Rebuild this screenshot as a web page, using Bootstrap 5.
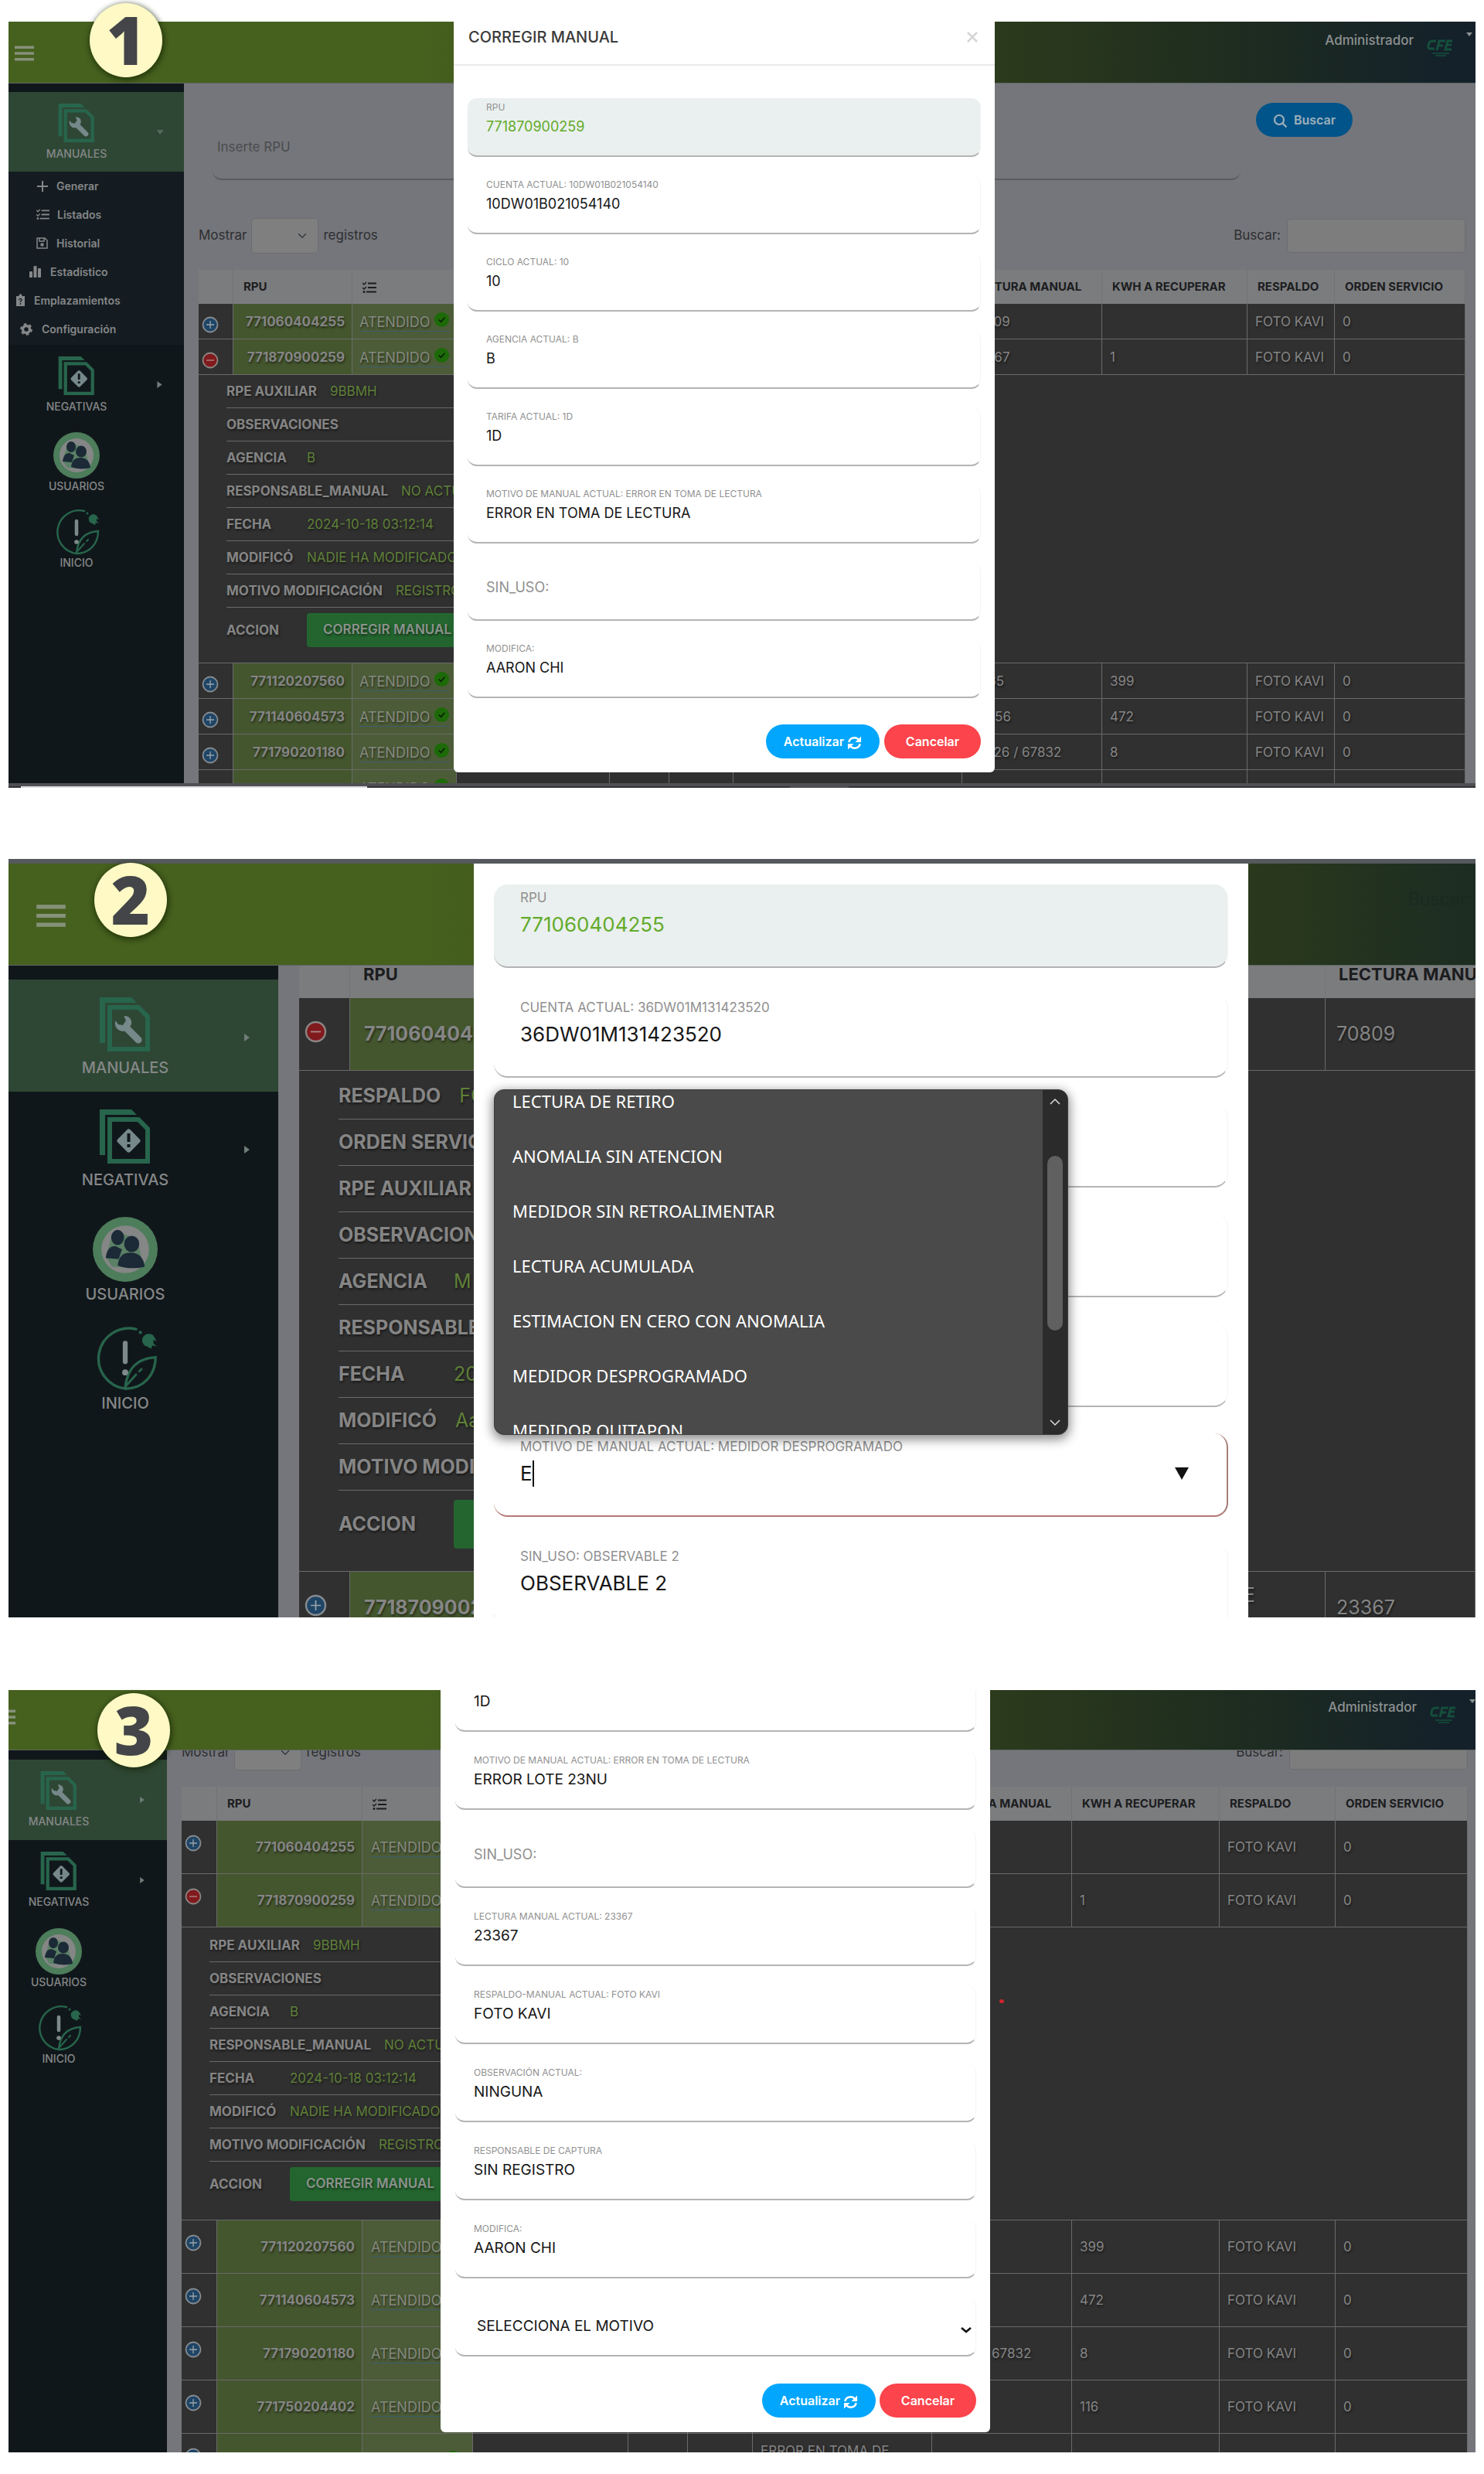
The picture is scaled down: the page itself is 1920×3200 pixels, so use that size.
<!DOCTYPE html>
<html lang="es">
<head>
<meta charset="utf-8">
<meta name="viewport" content="width=device-width, initial-scale=1">
<title>Corregir manual</title>
<link href="https://cdn.jsdelivr.net/npm/bootstrap@5.3.0/dist/css/bootstrap.min.css" rel="stylesheet">
<style>
body{font-family:Inter,"Liberation Sans",sans-serif;background:#fff;color:#222;padding:28px 11px 26px}
/* one step of the guide: number + cropped window */
.step{position:relative}
.step-num{position:absolute;z-index:5;width:94px;height:96px;border-radius:50%;background:#fef9c5;color:#444548;box-shadow:1px 2px 6px 2px rgba(20,35,0,.6);font:800 86px/94px "Open Sans",sans-serif;text-align:center}
.win{position:relative;overflow:hidden;background:#75767b;--fs:17px;--row:46px}
.s1 .win{height:991px}.s2 .win{height:981px}.s3 .win{height:986px}
.s2{margin-top:92px}.s3{margin-top:94px}
.s1 .step-num{left:105px;top:-24px}.s2 .step-num{left:111px;top:5px}.s3 .step-num{left:115px;top:4px}
/* top bar */
.topbar{background:linear-gradient(90deg,#46601e 0,#46601e 28%,#2a391c 69%,#1e2c20 84%,#14212a 98%);border-bottom:1px solid #5c6660;color:#8d8f8e;height:80px}
.s2 .topbar{height:132px;background:linear-gradient(90deg,#46601e 0,#46601e 28%,#2a391c 85%,#1c2c22 100%)}
.s3 .topbar{height:78px}
.s2 .win{border-top:6px solid #55585c}
.burger{border:0;background:none;padding:0;color:#86917a;display:block}
.s1 .burger{margin:27px 0 0 8px}.s2 .burger{margin:53px 0 0 36px}.s3 .burger{margin:21px 0 0 -16px}
.user{color:#8d9191;text-decoration:none;font-size:17px;font-weight:500;line-height:20px;padding-top:14px}
.s3 .user{padding-top:12px}
/* side menu */
.side{background:#10171a;flex:none;color:#858788;font-weight:500}
.s1 .side{width:227px;padding-top:11px}.s2 .side{width:349px;padding-top:18px}.s3 .side{width:205px;padding-top:12px}
.side a{color:#858788;text-decoration:none}
.item{display:flex;align-items:center;height:103px;font-size:14px;line-height:18px}
.item.on{background:#2e4734}
.item .pic{width:176px;text-align:center;flex:none}
.item .pic svg{display:block;margin:0 auto 6px}
.item .caret{margin-left:16px}
.item.round{height:99px}
.item.round .pic svg{margin-bottom:1px}
.s2 .item{height:145px;font-size:20px;line-height:26px;padding-top:5px}.s2 .item .pic{width:302px}
.s2 .item .pic svg{margin-bottom:8px}
.s2 .item .caret{margin-left:3px}
.s2 .item.round{height:141px}.s2 .item.round .pic svg{margin-bottom:3px}
.s3 .item{height:104px}.s3 .item .pic{width:130px}.s3 .item .caret{margin-left:40px}
.s3 .item.round{height:99px}
.sub{background:#141c21;height:224px;font-size:14px;font-weight:600}
.sub a{display:flex;align-items:center;height:37px;gap:10px}
.sub svg{flex:none}
.sub .in1{padding-left:36px}.sub .in2{padding-left:27px}.sub .in3{padding-left:9px}.sub .in4{padding-left:15px}
/* content */
.content{flex:1 1 0;min-width:0;padding:0 13px 0 19px;overflow:hidden}
.s2 .content{padding:0 0 0 27px}.s3 .content{padding:0 10px 0 19px}
.s1 .content{height:905px}
.rpu-search{margin:49px 0 0 18px;height:76px;flex:0 1 1330px;border:0;border-bottom:2px solid #5a5b5e;border-radius:12px;background:none;padding:0 6px 8px;font-size:17px;color:#3d3e41}
.rpu-search::placeholder{color:#4a4b4e;opacity:1}
.btn-find{margin:25px 0 0 20px;background:#01548a;color:#9fb0ba;width:125px;height:44px;border-radius:22px;font-size:16px;font-weight:600;padding:0}
.tools{height:46px;color:#2d2e31;font-size:17px;margin-bottom:21px}
.s1 .tools{margin-top:49px}.s3 .tools{margin-top:-20px}
.tools .form-select{width:87px;height:46px;background-color:#7f7f7f;border-color:#6c6d70;margin:0 6px;border-radius:5px}
.tools .form-control{width:231px;height:44px;background:#7d7d7d;border-color:#6c6d70;border-radius:5px}
.grid{table-layout:fixed;width:100%;border-collapse:separate;border-spacing:0;font-size:var(--fs);color:#858585;text-shadow:1px 2px 3px rgba(0,0,0,.5)}
.grid th{background:#7b7c7e;color:#1b1c1e;font-weight:700;text-shadow:none;border-right:1px solid #727375;height:44px;padding:0 0 0 13px;white-space:nowrap;font-size:15px}
.grid td{background:#303030;border-right:1px solid #6a6a6a;border-bottom:1px solid #6a6a6a;height:var(--row);padding:0 10px;overflow:hidden;line-height:24px}
.s3 .grid{--row:69px}.s2 .grid{--row:94px;--fs:25px;margin-top:-23px}
.grid td:first-child{vertical-align:top;padding:16px 0 0 4px}
.s1 .grid td:first-child{padding-top:14px}
.s2 .grid td:first-child{padding:25px 0 0 7px}
.grid td.num{background:#44562e;text-align:right;font-weight:700;padding-right:9px}
.grid td.st{background:#4c5c38;padding-left:9px;white-space:nowrap;font-size:18px}
.grid .st a{color:#85897f;text-decoration:none;display:inline-block;border-bottom:1px solid #3d5c6a;line-height:23px}
.grid .st svg{vertical-align:-1px;margin-left:5px}
.s3 .grid .st{padding-left:11px}
.s2 .grid th{height:65px;font-size:22px;padding:3px 0 0 17px}.s2 .grid td{padding:0 14px;line-height:33px}
.s2 .grid td.num{text-align:left;padding-left:18px}
.tog{border:0;background:none;padding:0;display:block}
.s1 .grid td.more,.s2 .grid td.more,.s3 .grid td.more{padding:0 0 0 36px;vertical-align:top;height:373px}
.s3 .grid td.more{height:379px;padding-top:2px}
.s2 .grid td.more{height:648px;padding:3px 0 0 51px}
.facts{list-style:none;margin:0;padding:0;width:60%}
.facts li{display:flex;align-items:center;height:43px;border-bottom:1px solid #6a6a6a;gap:17px;color:#5f8038;white-space:nowrap}
.facts b{min-width:87px;color:#858585;font-weight:700}
.facts li:last-child{height:58px;border:0}
.facts .btn{height:44px;background:#24652f;color:#8b938c;border-radius:4px;font-size:17px;font-weight:600;padding:0 20px;text-shadow:inherit}
.s2 .facts li{height:60px;gap:24px}.s2 .facts b{min-width:125px}.s2 .facts li:last-child{height:87px}
.s2 .facts .btn{height:63px}
.scroll-end{height:6px;background:linear-gradient(90deg,#333 0 16px,#ddd 16px 464px,#333 464px 1011px,#4c4c4e 1011px 1087px,#333 1087px) 0 100%/100% 2px no-repeat #4f5053}
/* dialog over the window */
.dlg{position:absolute;z-index:3;background:#fff;border-radius:0 0 6px 6px;overflow:hidden}
.s1 .dlg{left:576px;width:700px;top:-1px;height:972px}
.s2 .dlg{left:602px;width:1002px;top:0;bottom:0;border-radius:0}
.s3 .dlg{left:559px;width:711px;top:0;height:960px}
.dlg-head{height:58px;border-bottom:2px solid #e9ebec;padding:0 22px 14px 19px}
.dlg-head h1{font-size:20px;font-weight:500;margin:0;color:#3b3b3b}
.dlg-head button{border:0;background:none;padding:0;color:#d5d5d5;line-height:0}
.dlg-body{padding:42px 18px 0}
.s2 .dlg-body{padding:27px 26px 0}.s3 .dlg-body{padding:0 18px 0 19px}
.fld{display:flex;flex-direction:column;position:relative;height:76px;margin-bottom:24px;border-radius:12px;border-bottom:2px solid #b4b4b4;border-right:1px solid #f4f4f4;padding:5px 24px 0}
.fld label{font-size:12px;line-height:14px;color:#909090}
.fld input,.fld select{border:0;background:none;padding:0;outline:0;width:100%;font-size:18px;line-height:24px;height:24px;margin-top:6px;color:#161616}
.s3 .fld input,.s3 .fld select{font-size:19px}
.fld.ro{background:#eaf0ef}.fld.ro input{color:#63ab2b}
.fld.empty label{font-size:18px;line-height:24px;padding-top:16px}
.fld.empty input{position:absolute;inset:0;margin:0;height:74px}
.s3 .fld{margin-bottom:25px}.s3 .fld:first-child{margin-top:-22px}
.s2 .fld{height:108px;margin-bottom:34px;border-radius:18px;padding:7px 33px 0 34px}
.s2 .fld label{font-size:17px;line-height:20px}.s2 .fld input{font-size:26px;line-height:34px;height:34px;margin-top:8px}
.s2 .fld.hot{border-bottom-color:#b47a75;border-right:2px solid #a67c78}
.s2 .fld.hot input{width:18px;border-right:2px solid #111}
.tri{border:9px solid transparent;border-top:16px solid #111;border-bottom:0}
.fld.pick select{appearance:none;margin-top:20px;padding-left:4px}
.fld select + svg{position:absolute;right:5px;top:38px}
.acts{display:flex;justify-content:flex-end;gap:6px;margin-top:34px}
.s3 .acts{margin-top:35px;gap:5px}
.acts .btn{height:44px;border-radius:22px;color:#fff;font-size:16px;font-weight:600;padding:0;border:0}
.acts .go{width:147px;background:#02a6fc}.acts .no{width:125px;background:#fb444b}
/* suggestion list */
.opts{position:absolute;z-index:4;left:26px;top:292px;width:743px;height:447px;background:#4a4a4a;border-radius:13px;overflow:hidden;box-shadow:0 4px 14px 2px rgba(0,0,0,.45);border:1px solid #3c3c3c}
.opts ul{list-style:none;margin:0;padding:0 0 0 23px;flex:1;margin-top:-21px;font:22px/71px "Noto Sans",sans-serif;color:#fff}
.opts .rail{width:32px;background:#2b2b2b;padding:10px 6px}
.opts .thumb{height:226px;width:20px;border-radius:10px;background:#606060;margin-top:66px}
.ping{position:absolute;z-index:2;left:1282px;top:400px;width:6px;height:5px;border-radius:50%;background:#d32430}
.s2 .ghost{color:#1b2a20;font-size:23px;margin:29px 5px 0 0}
</style>
</head>
<body>
<svg width="0" height="0" class="position-absolute" aria-hidden="true">
<defs>
<symbol id="doc" viewBox="0 0 66 70"><path fill="#27654c" d="M0 0H41L48 7H7V59H0Z"/><path fill="none" stroke="#27654c" stroke-width="6" d="M13 13H50L62 25V67H13Z"/></symbol>
<symbol id="manual" viewBox="0 0 66 70"><use href="#doc"/><path d="M34 39 50 55" stroke="#76888a" stroke-width="9" stroke-linecap="round"/><path fill="#76888a" d="M20 31c-1 8 4 13 11 13l9-7c3-6 0-12-7-13-1 0-2 1-1 2l2 4-4 6-6-1-3-4Z"/></symbol>
<symbol id="negat" viewBox="0 0 66 70"><use href="#doc"/><rect x="26" y="29" width="23" height="23" rx="3" transform="rotate(45 37.5 40.500)" fill="#76888a"/><path d="M37.500 31v11M37.500 45v4" stroke="#10171a" stroke-width="4"/></symbol>
<symbol id="people" viewBox="0 0 60 60"><circle cx="30" cy="30" r="30" fill="#4d7d5b"/><circle cx="30" cy="30" r="22" fill="#858686"/><path fill="#4d7d5b" d="M17 20a7 7 0 0 1 12-4l12 4 5 22-10 5-18-1-6-9Z" opacity=".75"/><g fill="#1b2a36"><ellipse cx="23" cy="19" rx="6" ry="7"/><path d="M12 38c1-8 4-11 9-11l6 3-3 9Z"/><ellipse cx="36" cy="25" rx="7" ry="7.500"/><path d="M23 45c1-9 5-12 12-12s12 4 13 13c-8 2-17 2-25-1Z"/></g></symbol>
<symbol id="home" viewBox="0 0 60 60"><g fill="none" stroke="#27654c" stroke-width="2.400" stroke-linecap="round"><path d="M40 3A28 28 0 1 0 30 58c16 0 28-12 28-29-16 1-26 9-28 28"/><path d="M31 55 40 45M43 42l2-2" stroke-width="2"/></g><circle cx="44" cy="6" r="1.500" fill="#27654c"/><path fill="#27654c" d="M46 11c2-4 7-5 10-2l3 5-3-1 0 3 3 3-4-1-1 3-4-2c-3-1-5-4-4-8Z"/><path d="M30 16v17" stroke="#7e8a8a" stroke-width="4.500" stroke-linecap="round"/><circle cx="30" cy="43" r="2.800" fill="#7e8a8a"/></symbol>
<symbol id="plus" viewBox="0 0 22 22"><circle cx="11" cy="11" r="9.500" fill="#1f4566" stroke="#868b90" stroke-width="1.800"/><path d="M6 11h10M11 6v10" stroke="#9aa3aa" stroke-width="1.300"/></symbol>
<symbol id="minus" viewBox="0 0 22 22"><circle cx="11" cy="11" r="9.500" fill="#811a1d" stroke="#8b8684" stroke-width="1.800"/><path d="M6 11h10" stroke="#b08a8a" stroke-width="1.300"/></symbol>
<symbol id="ok" viewBox="0 0 22 22"><circle cx="11" cy="11" r="10" fill="#1c6a08"/><path d="m7 11 3 3 5-6" fill="none" stroke="#0a1c06" stroke-width="1.600"/></symbol>
<symbol id="list" viewBox="0 0 18 16"><path d="M7 2.500h11M7 8h11M5 13.500h13" stroke="currentColor" stroke-width="2"/><path d="m0 2 2 2 3-3M0 8l2 2 3-3" fill="none" stroke="currentColor" stroke-width="1.500"/><circle cx="2" cy="13.500" r="1.500" fill="currentColor"/></symbol>
<symbol id="bars" viewBox="0 0 26 20"><path d="M0 2h26M0 10h26M0 18h26" stroke="currentColor" stroke-width="3.600"/></symbol>
<symbol id="right" viewBox="0 0 7 10"><path d="M0 0 7 5 0 10Z" fill="#6e7d78"/></symbol>
<symbol id="cfe" viewBox="0 0 36 26"><g fill="none" stroke="#154f3c" stroke-width="3"><path d="M13 3H8C3 3 1 13 5 13h6M14 15l3-12h8M16 9h6M34 3h-6l-3 11h8M27 8h6"/></g><path d="M8 19h22M12 22h14" stroke="#154f3c" stroke-width="1.500"/></symbol>
<symbol id="sync" viewBox="0 0 20 18"><path fill="none" stroke="#fff" stroke-width="2.600" d="M2.500 8C3.500 1.500 12 0 16 5M17.500 10c-1 6.500-9.500 8-13.500 3"/><path fill="#fff" d="M19 0v8h-8ZM1 18v-8h8Z"/></symbol>
</defs></svg>

<main>
<section class="step s1">
<div class="step-num">1</div>
<div class="win">
<header class="topbar d-flex justify-content-between align-items-start">
<button class="burger" aria-label="Menú"><svg width="25" height="20"><use href="#bars"/></svg></button>
<a href="#" class="user d-flex align-items-start pe-1"><span class="me-3">Administrador</span><svg class="mt-2 me-3" width="36" height="26"><use href="#cfe"/></svg><svg width="8" height="5"><path d="M0 0h8L4 5Z" fill="#8d9191"/></svg></a>
</header>
<div class="d-flex">
<nav class="side">
<a href="#" class="item on"><span class="pic"><svg width="48" height="50"><use href="#manual"/></svg>MANUALES</span><svg class="caret" width="9" height="6"><path d="M0 0h9L4 6Z" fill="#54695c"/></svg></a>
<div class="sub">
<a href="#" class="in1"><svg width="16" height="16"><path d="M8 1v14M1 8h14" stroke="#858788" stroke-width="2"/></svg>Generar</a>
<a href="#" class="in1"><svg width="17" height="15"><use href="#list"/></svg>Listados</a>
<a href="#" class="in1"><svg width="16" height="15" fill="none" stroke="#858788" stroke-width="1.500"><path d="M1 1h10l3 3v10H1ZM4 1v4h6V1"/><circle cx="7.500" cy="9.500" r="1.500" fill="#858788"/></svg>Historial</a>
<a href="#" class="in2"><svg width="17" height="15" fill="#858788"><rect y="7" width="4" height="8" rx="1"/><rect x="5.500" width="4" height="15" rx="1"/><rect x="11" y="3" width="4" height="12" rx="1"/></svg>Estadístico</a>
<a href="#" class="in3"><svg width="14" height="17"><path d="M1 3h3l2-3h1l2 3h3v13H1Z" fill="#858788"/><path d="M4.500 8c1-3 5-1 3 1l-1 1v1M6.500 12v2" stroke="#141c21" fill="none" stroke-width="1.300"/></svg>Emplazamientos</a>
<a href="#" class="in4"><svg width="18" height="16"><circle cx="8" cy="8" r="4.500" fill="none" stroke="#858788" stroke-width="3.500"/><circle cx="8" cy="8" r="6.700" fill="none" stroke="#858788" stroke-width="2.400" stroke-dasharray="3.500 3.510"/></svg>Configuración</a>
</div>
<a href="#" class="item"><span class="pic"><svg width="48" height="50"><use href="#negat"/></svg>NEGATIVAS</span><svg class="caret" width="7" height="9"><use href="#right"/></svg></a>
<a href="#" class="item round"><span class="pic"><svg width="60" height="60"><use href="#people"/></svg>USUARIOS</span></a>
<a href="#" class="item round"><span class="pic"><svg width="60" height="60"><use href="#home"/></svg>INICIO</span></a>
</nav>
<div class="content">
<div class="d-flex align-items-start"><input class="rpu-search" type="text" placeholder="Inserte RPU" aria-label="Inserte RPU"><button class="btn btn-find"><svg width="19" height="19" class="me-2" fill="none" stroke="#9fb0ba" stroke-width="2.200"><circle cx="8" cy="8" r="6"/><path d="m12.500 12.500 5 5"/></svg>Buscar</button></div>
<div class="tools d-flex align-items-center"><label for="n1">Mostrar</label><select id="n1" class="form-select"><option></option></select>registros<label for="q1" class="ms-auto me-2">Buscar:</label><input id="q1" class="form-control" type="search"></div>
<table class="grid">
<colgroup><col style="width:45px"><col style="width:154px"><col style="width:135px"><col style="width:198px"><col style="width:77px"><col style="width:83px"><col style="width:296px"><col style="width:181px"><col style="width:188px"><col style="width:113px"><col></colgroup>
<thead><tr><th></th><th>RPU</th><th><svg width="18" height="16"><use href="#list"/></svg></th><th></th><th></th><th></th><th></th><th>LECTURA MANUAL</th><th>KWH A RECUPERAR</th><th>RESPALDO</th><th>ORDEN SERVICIO</th></tr></thead>
<tbody>
<tr><td><button class="tog" aria-label="Abrir"><svg width="22" height="22"><use href="#plus"/></svg></button></td><td class="num">771060404255</td><td class="st"><a href="#">ATENDIDO<svg width="21" height="21"><use href="#ok"/></svg></a></td><td></td><td></td><td></td><td></td><td>70809</td><td></td><td class="text-nowrap">FOTO KAVI</td><td>0</td></tr>
<tr><td><button class="tog" aria-label="Cerrar"><svg width="22" height="22"><use href="#minus"/></svg></button></td><td class="num">771870900259</td><td class="st"><a href="#">ATENDIDO<svg width="21" height="21"><use href="#ok"/></svg></a></td><td></td><td></td><td></td><td></td><td>23367</td><td>1</td><td class="text-nowrap">FOTO KAVI</td><td>0</td></tr>
<tr><td colspan="11" class="more"><ul class="facts"><li><b>RPE AUXILIAR</b>9BBMH</li><li><b>OBSERVACIONES</b></li><li><b>AGENCIA</b>B</li><li><b>RESPONSABLE_MANUAL</b>NO ACTUALIZADO</li><li><b>FECHA</b>2024-10-18 03:12:14</li><li><b>MODIFICÓ</b>NADIE HA MODIFICADO</li><li><b>MOTIVO MODIFICACIÓN</b>REGISTRO</li><li><b>ACCION</b><button class="btn">CORREGIR MANUAL</button></li></ul></td></tr>
<tr><td><button class="tog" aria-label="Abrir"><svg width="22" height="22"><use href="#plus"/></svg></button></td><td class="num">771120207560</td><td class="st"><a href="#">ATENDIDO<svg width="21" height="21"><use href="#ok"/></svg></a></td><td></td><td></td><td></td><td></td><td>11765</td><td>399</td><td class="text-nowrap">FOTO KAVI</td><td>0</td></tr>
<tr><td><button class="tog" aria-label="Abrir"><svg width="22" height="22"><use href="#plus"/></svg></button></td><td class="num">771140604573</td><td class="st"><a href="#">ATENDIDO<svg width="21" height="21"><use href="#ok"/></svg></a></td><td></td><td></td><td></td><td></td><td>40256</td><td>472</td><td class="text-nowrap">FOTO KAVI</td><td>0</td></tr>
<tr><td><button class="tog" aria-label="Abrir"><svg width="22" height="22"><use href="#plus"/></svg></button></td><td class="num">771790201180</td><td class="st"><a href="#">ATENDIDO<svg width="21" height="21"><use href="#ok"/></svg></a></td><td></td><td></td><td></td><td></td><td>67826 / 67832</td><td>8</td><td class="text-nowrap">FOTO KAVI</td><td>0</td></tr>
<tr><td></td><td class="num"></td><td class="st"><a href="#">ATENDIDO<svg width="21" height="21"><use href="#ok"/></svg></a></td><td></td><td></td><td></td><td></td><td></td><td></td><td></td><td></td></tr>
</tbody></table>
</div>
</div>
<div class="scroll-end"></div>
<form class="dlg">
<div class="dlg-head d-flex justify-content-between align-items-center"><h1>CORREGIR MANUAL</h1><button type="button" aria-label="Cerrar"><svg width="14" height="14" stroke="currentColor" stroke-width="2.500"><path d="m1 1 12 12M13 1 1 13"/></svg></button></div>
<div class="dlg-body">
<div class="fld ro"><label for="a1">RPU</label><input id="a1" value="771870900259" readonly></div>
<div class="fld"><label for="a2">CUENTA ACTUAL: 10DW01B021054140</label><input id="a2" value="10DW01B021054140"></div>
<div class="fld"><label for="a3">CICLO ACTUAL: 10</label><input id="a3" value="10"></div>
<div class="fld"><label for="a4">AGENCIA ACTUAL: B</label><input id="a4" value="B"></div>
<div class="fld"><label for="a5">TARIFA ACTUAL: 1D</label><input id="a5" value="1D"></div>
<div class="fld"><label for="a6">MOTIVO DE MANUAL ACTUAL: ERROR EN TOMA DE LECTURA</label><input id="a6" value="ERROR EN TOMA DE LECTURA"></div>
<div class="fld empty"><label for="a7">SIN_USO:</label><input id="a7"></div>
<div class="fld"><label for="a8">MODIFICA:</label><input id="a8" value="AARON CHI"></div>
<div class="acts"><button type="button" class="btn go">Actualizar <svg width="19" height="18"><use href="#sync"/></svg></button><button type="button" class="btn no">Cancelar</button></div>
</div>
</form>
</div>
</section>

<section class="step s2">
<div class="step-num">2</div>
<div class="win">
<header class="topbar d-flex justify-content-between align-items-start">
<button class="burger" aria-label="Menú"><svg width="38" height="29"><use href="#bars"/></svg></button><span class="ghost">Buscar:</span>
</header>
<div class="d-flex">
<nav class="side">
<a href="#" class="item on"><span class="pic"><svg width="66" height="70"><use href="#manual"/></svg>MANUALES</span><svg class="caret" width="7" height="10"><use href="#right"/></svg></a>
<a href="#" class="item"><span class="pic"><svg width="66" height="70"><use href="#negat"/></svg>NEGATIVAS</span><svg class="caret" width="7" height="10"><use href="#right"/></svg></a>
<a href="#" class="item round"><span class="pic"><svg width="84" height="84"><use href="#people"/></svg>USUARIOS</span></a>
<a href="#" class="item round"><span class="pic"><svg width="84" height="84"><use href="#home"/></svg>INICIO</span></a>
</nav>
<div class="content">
<table class="grid">
<colgroup><col style="width:66px"><col style="width:912px"><col style="width:350px"><col></colgroup>
<thead><tr><th></th><th>RPU</th><th></th><th>LECTURA MANUAL</th></tr></thead>
<tbody>
<tr><td><button class="tog" aria-label="Cerrar"><svg width="29" height="29"><use href="#minus"/></svg></button></td><td class="num">771060404255</td><td>MEDIDOR<br>DESPROGRAMADO</td><td>70809</td></tr>
<tr><td colspan="4" class="more"><ul class="facts"><li><b>RESPALDO</b>FOTO KAVI</li><li><b>ORDEN SERVICIO</b>0</li><li><b>RPE AUXILIAR</b></li><li><b>OBSERVACIONES</b></li><li><b>AGENCIA</b>M</li><li><b>RESPONSABLE_MANUAL</b></li><li><b>FECHA</b>2024</li><li><b>MODIFICÓ</b>Aaron</li><li><b>MOTIVO MODIFICACIÓN</b></li><li><b>ACCION</b><button class="btn" aria-label="Corregir manual"><svg width="180" height="20"></svg></button></li></ul></td></tr>
<tr><td><button class="tog" aria-label="Abrir"><svg width="29" height="29"><use href="#plus"/></svg></button></td><td class="num">771870900259</td><td>ERROR EN TOMA DE<br>LECTURA</td><td>23367</td></tr>
</tbody></table>
</div>
</div>
<form class="dlg">
<div class="dlg-body">
<div class="fld ro"><label for="b1">RPU</label><input id="b1" value="771060404255" readonly></div>
<div class="fld"><label for="b2">CUENTA ACTUAL: 36DW01M131423520</label><input id="b2" value="36DW01M131423520"></div>
<div class="fld"></div><div class="fld"></div><div class="fld"></div>
<div class="fld hot"><label for="b6">MOTIVO DE MANUAL ACTUAL: MEDIDOR DESPROGRAMADO</label><div class="d-flex justify-content-between align-items-center pe-3"><input id="b6" value="E"><span class="tri mt-2"></span></div></div>
<div class="fld"><label for="b7">SIN_USO: OBSERVABLE 2</label><input id="b7" value="OBSERVABLE 2"></div>
</div>
<div class="opts d-flex"><ul><li>LECTURA DE RETIRO</li><li>ANOMALIA SIN ATENCION</li><li>MEDIDOR SIN RETROALIMENTAR</li><li>LECTURA ACUMULADA</li><li>ESTIMACION EN CERO CON ANOMALIA</li><li>MEDIDOR DESPROGRAMADO</li><li>MEDIDOR QUITAPON</li></ul>
<div class="rail d-flex flex-column align-items-center"><svg width="14" height="9" fill="none" stroke="#ddd" stroke-width="1.500"><path d="m1 8 6-6 6 6"/></svg><div class="thumb"></div><svg class="mt-auto" width="14" height="9" fill="none" stroke="#ddd" stroke-width="1.500"><path d="m1 1 6 6 6-6"/></svg></div></div>
</form>
</div>
</section>

<section class="step s3">
<div class="step-num">3</div>
<div class="win">
<header class="topbar d-flex justify-content-between align-items-start">
<button class="burger" aria-label="Menú"><svg width="25" height="20"><use href="#bars"/></svg></button>
<a href="#" class="user d-flex align-items-start"><span class="me-3">Administrador</span><svg class="mt-2 me-3" width="36" height="26"><use href="#cfe"/></svg><svg width="8" height="5"><path d="M0 0h8L4 5Z" fill="#8d9191"/></svg></a>
</header>
<div class="d-flex">
<nav class="side">
<a href="#" class="item on"><span class="pic"><svg width="48" height="50"><use href="#manual"/></svg>MANUALES</span><svg class="caret" width="6" height="8"><use href="#right"/></svg></a>
<a href="#" class="item"><span class="pic"><svg width="48" height="50"><use href="#negat"/></svg>NEGATIVAS</span><svg class="caret" width="6" height="8"><use href="#right"/></svg></a>
<a href="#" class="item round"><span class="pic"><svg width="60" height="60"><use href="#people"/></svg>USUARIOS</span></a>
<a href="#" class="item round"><span class="pic"><svg width="60" height="60"><use href="#home"/></svg>INICIO</span></a>
</nav>
<div class="content">
<div class="tools d-flex align-items-center"><label for="n3">Mostrar</label><select id="n3" class="form-select"><option></option></select>registros<label for="q3" class="ms-auto me-2">Buscar:</label><input id="q3" class="form-control" type="search"></div>
<table class="grid">
<colgroup><col style="width:46px"><col style="width:188px"><col style="width:143px"><col style="width:201px"><col style="width:77px"><col style="width:84px"><col style="width:232px"><col style="width:181px"><col style="width:191px"><col style="width:150px"><col></colgroup>
<thead><tr><th></th><th>RPU</th><th><svg width="18" height="16"><use href="#list"/></svg></th><th></th><th></th><th></th><th></th><th>LECTURA MANUAL</th><th>KWH A RECUPERAR</th><th>RESPALDO</th><th>ORDEN SERVICIO</th></tr></thead>
<tbody>
<tr><td><button class="tog" aria-label="Abrir"><svg width="22" height="22"><use href="#plus"/></svg></button></td><td class="num">771060404255</td><td class="st"><a href="#">ATENDIDO<svg width="21" height="21"><use href="#ok"/></svg></a></td><td></td><td></td><td></td><td></td><td>70809</td><td></td><td>FOTO KAVI</td><td>0</td></tr>
<tr><td><button class="tog" aria-label="Cerrar"><svg width="22" height="22"><use href="#minus"/></svg></button></td><td class="num">771870900259</td><td class="st"><a href="#">ATENDIDO<svg width="21" height="21"><use href="#ok"/></svg></a></td><td></td><td></td><td></td><td></td><td>23367</td><td>1</td><td>FOTO KAVI</td><td>0</td></tr>
<tr><td colspan="11" class="more"><ul class="facts"><li><b>RPE AUXILIAR</b>9BBMH</li><li><b>OBSERVACIONES</b></li><li><b>AGENCIA</b>B</li><li><b>RESPONSABLE_MANUAL</b>NO ACTUALIZADO</li><li><b>FECHA</b>2024-10-18 03:12:14</li><li><b>MODIFICÓ</b>NADIE HA MODIFICADO</li><li><b>MOTIVO MODIFICACIÓN</b>REGISTRO</li><li><b>ACCION</b><button class="btn">CORREGIR MANUAL</button></li></ul></td></tr>
<tr><td><button class="tog" aria-label="Abrir"><svg width="22" height="22"><use href="#plus"/></svg></button></td><td class="num">771120207560</td><td class="st"><a href="#">ATENDIDO<svg width="21" height="21"><use href="#ok"/></svg></a></td><td></td><td></td><td></td><td></td><td>11765</td><td>399</td><td>FOTO KAVI</td><td>0</td></tr>
<tr><td><button class="tog" aria-label="Abrir"><svg width="22" height="22"><use href="#plus"/></svg></button></td><td class="num">771140604573</td><td class="st"><a href="#">ATENDIDO<svg width="21" height="21"><use href="#ok"/></svg></a></td><td></td><td></td><td></td><td></td><td>40256</td><td>472</td><td>FOTO KAVI</td><td>0</td></tr>
<tr><td><button class="tog" aria-label="Abrir"><svg width="22" height="22"><use href="#plus"/></svg></button></td><td class="num">771790201180</td><td class="st"><a href="#">ATENDIDO<svg width="21" height="21"><use href="#ok"/></svg></a></td><td></td><td></td><td></td><td></td><td>67826 / 67832</td><td>8</td><td>FOTO KAVI</td><td>0</td></tr>
<tr><td><button class="tog" aria-label="Abrir"><svg width="22" height="22"><use href="#plus"/></svg></button></td><td class="num">771750204402</td><td class="st"><a href="#">ATENDIDO<svg width="21" height="21"><use href="#ok"/></svg></a></td><td></td><td></td><td></td><td></td><td></td><td>116</td><td>FOTO KAVI</td><td>0</td></tr>
<tr><td><button class="tog" aria-label="Abrir"><svg width="22" height="22"><use href="#plus"/></svg></button></td><td class="num"></td><td class="st"><a href="#">ATENDIDO<svg width="21" height="21"><use href="#ok"/></svg></a></td><td></td><td></td><td></td><td>ERROR EN TOMA DE<br>LECTURA</td><td></td><td></td><td></td><td></td></tr>
</tbody></table>
</div>
</div>
<span class="ping"></span>
<form class="dlg">
<div class="dlg-body">
<div class="fld"><label for="c1">TARIFA ACTUAL: 1D</label><input id="c1" value="1D"></div>
<div class="fld"><label for="c2">MOTIVO DE MANUAL ACTUAL: ERROR EN TOMA DE LECTURA</label><input id="c2" value="ERROR LOTE 23NU"></div>
<div class="fld empty"><label for="c3">SIN_USO:</label><input id="c3"></div>
<div class="fld"><label for="c4">LECTURA MANUAL ACTUAL: 23367</label><input id="c4" value="23367"></div>
<div class="fld"><label for="c5">RESPALDO-MANUAL ACTUAL: FOTO KAVI</label><input id="c5" value="FOTO KAVI"></div>
<div class="fld"><label for="c6">OBSERVACIÓN ACTUAL:</label><input id="c6" value="NINGUNA"></div>
<div class="fld"><label for="c7">RESPONSABLE DE CAPTURA</label><input id="c7" value="SIN REGISTRO"></div>
<div class="fld"><label for="c8">MODIFICA:</label><input id="c8" value="AARON CHI"></div>
<div class="fld pick"><select aria-label="Motivo"><option>SELECCIONA EL MOTIVO</option></select><svg width="14" height="9" fill="none" stroke="#111" stroke-width="2.500"><path d="m1 1 6 5 6-5"/></svg></div>
<div class="acts"><button type="button" class="btn go">Actualizar <svg width="19" height="18"><use href="#sync"/></svg></button><button type="button" class="btn no">Cancelar</button></div>
</div>
</form>
</div>
</section>
</main>
<script src="https://cdn.jsdelivr.net/npm/bootstrap@5.3.0/dist/js/bootstrap.bundle.min.js"></script>
</body>
</html>
